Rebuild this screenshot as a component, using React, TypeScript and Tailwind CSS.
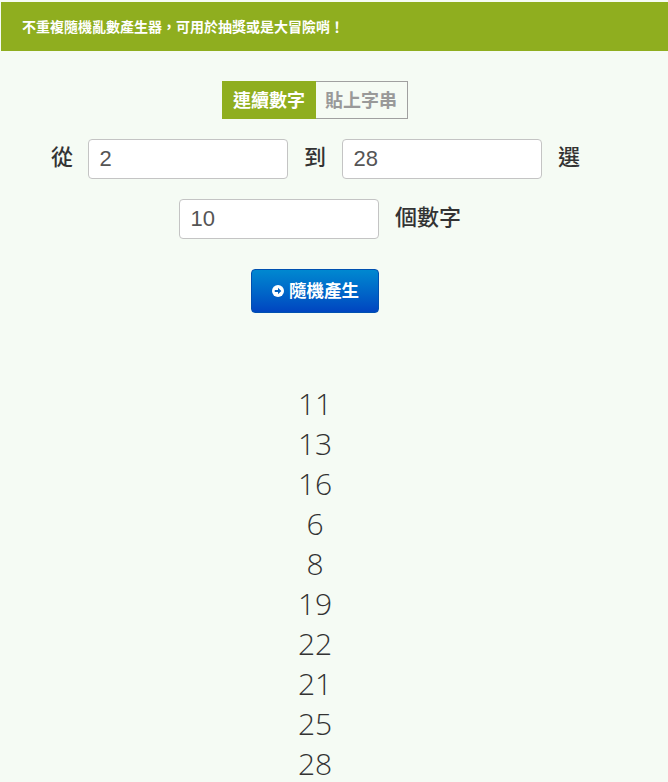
import React from "react";

const cjk = { fontFamily: '"Liberation Sans", "Noto Sans CJK TC", sans-serif' };
const nums = [11, 13, 16, 6, 8, 19, 22, 21, 25, 28];
const title = "不重複隨機亂數產生器\uFF0C可用於抽獎或是大冒險哨\uFF01";

function Field({ value }: { value: string }) {
  return (
    <input
      readOnly
      value={value}
      className="h-10 w-[200px] rounded border border-[#c4c4c4] bg-white px-[10.5px] text-[22px] text-[#555555] outline-none"
      style={cjk}
    />
  );
}

function Label({ children }: { children: React.ReactNode }) {
  return <span className="-mt-px text-[22px] font-medium leading-10 text-[#333333]">{children}</span>;
}

export default function App() {
  return (
    <div className="h-[782px] w-[668px] bg-[#f5fbf4] pt-0.5" style={cjk}>
      <div className="ml-px flex h-[49px] items-center bg-[#8fae1f] pl-[21px] pt-0.5 text-[14px] font-bold text-white">
        {title}
      </div>
      <div className="w-[630px]">
        <div className="mt-[30px] flex justify-center">
          <div className="flex h-[38px] text-[18px] font-bold">
            <div className="flex w-[94px] items-center justify-center bg-[#8fae1f] pt-0.5 text-white">連續數字</div>
            <div className="flex w-[92px] items-center justify-center border border-[#a0a0a0] border-l-0 pt-0.5 pr-px text-[#999999]">貼上字串</div>
          </div>
        </div>
        <div className="mt-5 flex justify-center pl-px">
          <Label>從</Label>
          <div className="ml-[15px] mr-4"><Field value="2" /></div>
          <Label>到</Label>
          <div className="mx-4"><Field value="28" /></div>
          <Label>選</Label>
        </div>
        <div className="mt-5 flex justify-center gap-4 pl-[10px]">
          <Field value="10" />
          <Label>個數字</Label>
        </div>
        <div className="mt-[30px] flex justify-center">
          <button className="flex h-11 w-32 items-center justify-center gap-[5px] rounded border border-[#0050b0] bg-gradient-to-b from-[#0088d0] to-[#0044c0] pl-[1px] text-[17.5px] font-bold text-white">
            <svg width="12" height="12" viewBox="0 0 13 13" aria-hidden="true">
              <circle cx="6.5" cy="6.5" r="6.5" fill="#ffffff" />
              <path d="M3 5.3h3.5V3l3.6 3.5L6.5 10V7.7H3z" fill="#0060c0" />
            </svg>
            隨機產生
          </button>
        </div>
        <div
          className="mt-[71px] text-center text-[30px] font-light leading-10 text-[#333333]"
          style={{ fontFamily: '"Open Sans", sans-serif' }}
        >
          {nums.map((n) => (
            <div key={n}>{n}</div>
          ))}
        </div>
      </div>
    </div>
  );
}
